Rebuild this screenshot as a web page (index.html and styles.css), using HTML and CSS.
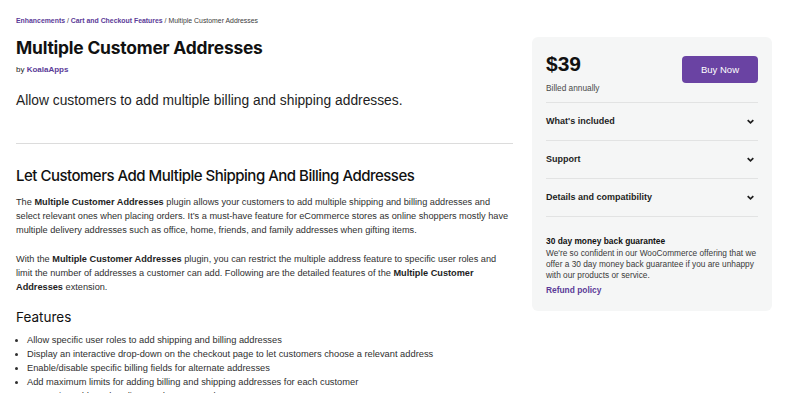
FILE: index.html
```html
<!DOCTYPE html>
<html lang="en">
<head>
    <meta charset="UTF-8">
    <meta name="viewport" content="width=device-width, initial-scale=1.0">
    <title>Multiple Customer Addresses - WooCommerce Marketplace</title>
    <link rel="stylesheet" href="styles.css">
</head>
<body>
    <div class="page">
        <main class="product-main">
            <nav class="breadcrumb">
                <a href="#">Enhancements</a> / <a href="#">Cart and Checkout Features</a> / Multiple Customer Addresses
            </nav>

            <h1 class="product-title">Multiple Customer Addresses</h1>
            <p class="byline">by <a href="#">KoalaApps</a></p>

            <p class="tagline">Allow customers to add multiple billing and shipping addresses.</p>

            <hr class="divider">

            <section class="description">
                <h2>Let Customers Add Multiple Shipping And Billing Addresses</h2>
                <p>The <strong>Multiple Customer Addresses</strong> plugin allows your customers to add multiple shipping and billing addresses and select relevant ones when placing orders. It’s a must-have feature for eCommerce stores as online shoppers mostly have multiple delivery addresses such as office, home, friends, and family addresses when gifting items.</p>
                <p>With the <strong>Multiple Customer Addresses</strong> plugin, you can restrict the multiple address feature to specific user roles and limit the number of addresses a customer can add. Following are the detailed features of the <strong>Multiple Customer Addresses</strong> extension.</p>

                <h3>Features</h3>
                <ul>
                    <li>Allow specific user roles to add shipping and billing addresses</li>
                    <li>Display an interactive drop-down on the checkout page to let customers choose a relevant address</li>
                    <li>Enable/disable specific billing fields for alternate addresses</li>
                    <li>Add maximum limits for adding billing and shipping addresses for each customer</li>
                    <li>Customize address headings and ADD NEW button text</li>
                </ul>
            </section>
        </main>

        <aside class="purchase-card">
            <div class="price-row">
                <div>
                    <div class="price">$39</div>
                    <div class="billing">Billed annually</div>
                </div>
                <button class="buy-button">Buy Now</button>
            </div>

            <div class="accordion">
                <div class="accordion-item">
                    <span>What's included</span>
                    <svg class="chevron" viewBox="0 0 8 8"><path d="M1.5 2.8 4 5.2 6.5 2.8"/></svg>
                </div>
                <div class="accordion-item">
                    <span>Support</span>
                    <svg class="chevron" viewBox="0 0 8 8"><path d="M1.5 2.8 4 5.2 6.5 2.8"/></svg>
                </div>
                <div class="accordion-item">
                    <span>Details and compatibility</span>
                    <svg class="chevron" viewBox="0 0 8 8"><path d="M1.5 2.8 4 5.2 6.5 2.8"/></svg>
                </div>
            </div>

            <div class="guarantee">
                <h4>30 day money back guarantee</h4>
                <p>We're so confident in our WooCommerce offering that we offer a 30 day money back guarantee if you are unhappy with our products or service.</p>
                <a href="#">Refund policy</a>
            </div>
        </aside>
    </div>
</body>
</html>
```

FILE: styles.css
```css
* {
    margin: 0;
    padding: 0;
    box-sizing: border-box;
}

body {
    font-family: 'Liberation Sans', Arial, sans-serif;
    background: #ffffff;
    color: #2f2f2f;
}

a {
    color: #5b3b98;
    font-weight: bold;
    text-decoration: none;
}

.page {
    display: flex;
    align-items: flex-start;
    gap: 19px;
    padding: 0 28px 0 16px;
}

/* Left column */

.product-main {
    width: 497px;
    flex-shrink: 0;
}

.breadcrumb {
    margin-top: 16px;
    font-size: 6.9px;
    line-height: 10px;
    color: #3c3c3c;
}

.product-title {
    margin-top: 10px;
    font-family: 'Inter', sans-serif;
    font-size: 17.4px;
    line-height: 24px;
    font-weight: 700;
    letter-spacing: -0.2px;
    color: #111;
}

.byline {
    margin-top: 4px;
    font-size: 8px;
    line-height: 12px;
    color: #222;
}

.tagline {
    margin-top: 16px;
    font-size: 13.8px;
    line-height: 18px;
    color: #1e1e1e;
}

.divider {
    margin-top: 33px;
    border: none;
    border-top: 1px solid #dcdcdc;
}

.description h2 {
    margin-top: 22px;
    font-family: 'Inter', sans-serif;
    font-size: 15px;
    line-height: 20px;
    font-weight: 500;
    letter-spacing: -0.5px;
    color: #111;
}

.description p {
    margin-top: 9px;
    font-size: 9.2px;
    line-height: 14px;
}

.description p + p {
    margin-top: 15px;
}

.description strong {
    color: #1e1e1e;
}

.description h3 {
    margin-top: 14px;
    font-family: 'Inter', sans-serif;
    font-size: 13.5px;
    line-height: 18px;
    font-weight: 400;
    color: #111;
}

.description ul {
    margin-top: 7px;
    padding-left: 11px;
    font-size: 9.3px;
    line-height: 14px;
}

/* Sidebar */

.purchase-card {
    width: 240px;
    flex-shrink: 0;
    margin-top: 37px;
    background: #f5f6f6;
    border-radius: 6px;
    padding: 15px 14px 15px;
}

.price-row {
    display: flex;
    justify-content: space-between;
    align-items: flex-start;
    padding-bottom: 8px;
}

.price {
    font-size: 21px;
    line-height: 24px;
    font-weight: bold;
    color: #111;
}

.billing {
    margin-top: 6px;
    font-size: 8.3px;
    line-height: 12px;
    color: #4a4a4a;
}

.buy-button {
    margin-top: 4px;
    width: 76px;
    height: 27px;
    border: none;
    border-radius: 4px;
    background: #6a43a3;
    color: #fff;
    font-family: 'Liberation Sans', Arial, sans-serif;
    font-size: 9.5px;
    cursor: pointer;
}

.accordion-item {
    display: flex;
    justify-content: space-between;
    align-items: center;
    border-top: 1px solid #e2e3e3;
    padding: 13px 0;
    font-size: 9px;
    line-height: 11px;
    font-weight: bold;
    color: #1e1e1e;
}

.chevron {
    width: 9px;
    height: 9px;
    margin-right: 3px;
    fill: none;
    stroke: #1e1e1e;
    stroke-width: 1.5;
}

.guarantee {
    border-top: 1px solid #e2e3e3;
    padding-top: 18px;
}

.guarantee h4 {
    font-size: 8.4px;
    line-height: 12px;
    color: #111;
}

.guarantee p {
    margin-top: 1px;
    font-size: 8.3px;
    line-height: 11px;
    color: #3a3a3a;
}

.guarantee a {
    display: block;
    margin-top: 3px;
    font-size: 8.4px;
    line-height: 12px;
}
```
